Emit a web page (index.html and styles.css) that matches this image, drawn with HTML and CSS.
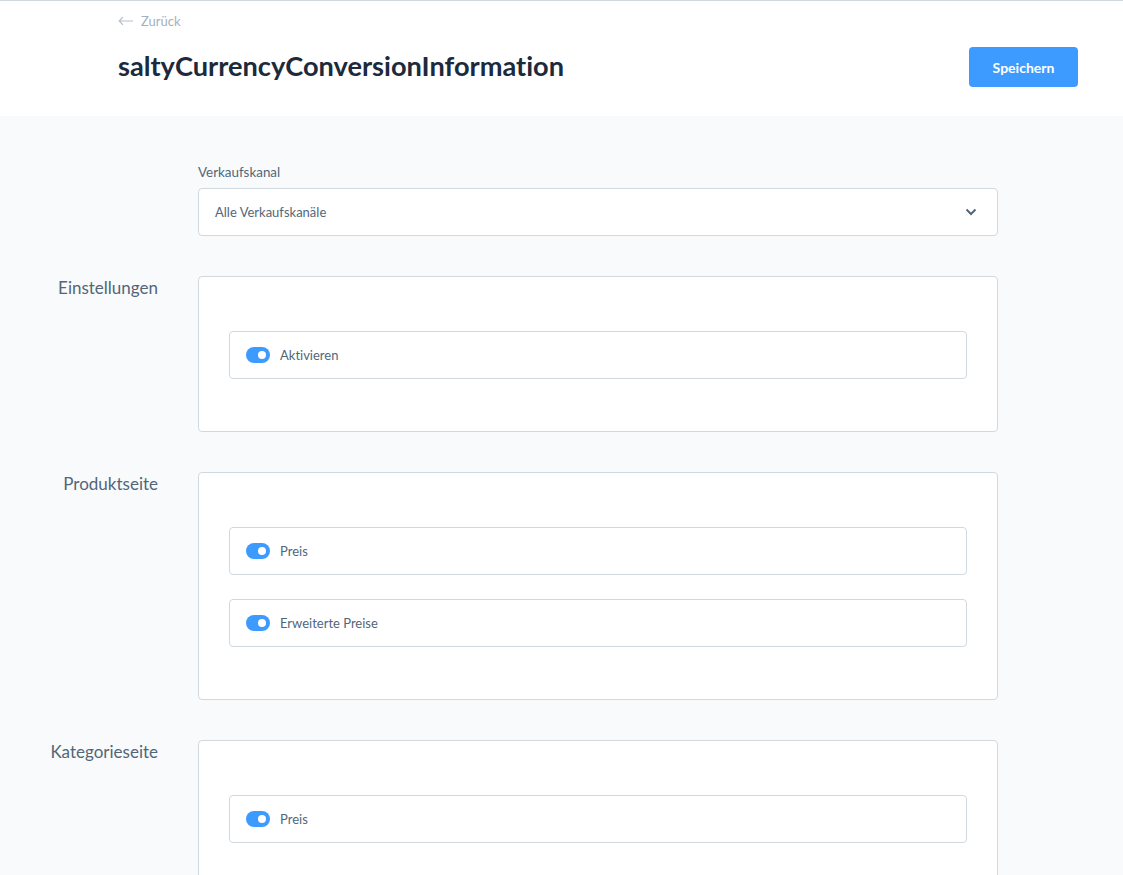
FILE: index.html
```html
<!DOCTYPE html>
<html lang="de">
<head>
<meta charset="utf-8">
<title>saltyCurrencyConversionInformation</title>
<link rel="stylesheet" href="styles.css">
</head>
<body>
<header class="topbar">
  <div class="topbar-left">
    <a class="back" href="#"><svg class="back-icon" width="16" height="10" viewBox="0 0 16 10"><path d="M15 5H1.5M5 1.2L1.2 5 5 8.8" fill="none" stroke="currentColor" stroke-width="1.2"/></svg>Zurück</a>
    <h1 class="title">saltyCurrencyConversionInformation</h1>
  </div>
  <button class="btn-primary">Speichern</button>
</header>
<main class="content">
  <div class="grid">
    <div></div>
    <div class="field">
      <label class="field-label">Verkaufskanal</label>
      <div class="select">
        <span>Alle Verkaufskanäle</span>
        <svg class="chevron" width="12" height="8" viewBox="0 0 12 8"><path d="M1.5 1.5L6 6l4.5-4.5" fill="none" stroke="#52667a" stroke-width="2"/></svg>
      </div>
    </div>

    <div class="section-label">Einstellungen</div>
    <div class="card">
      <div class="switch-row"><span class="toggle"></span>Aktivieren</div>
    </div>

    <div class="section-label">Produktseite</div>
    <div class="card">
      <div class="switch-row"><span class="toggle"></span>Preis</div>
      <div class="switch-row"><span class="toggle"></span>Erweiterte Preise</div>
    </div>

    <div class="section-label">Kategorieseite</div>
    <div class="card">
      <div class="switch-row"><span class="toggle"></span>Preis</div>
    </div>
  </div>
</main>
</body>
</html>
```

FILE: styles.css
```css
* { box-sizing: border-box; }
html, body { margin: 0; }
body {
  background: #f9fafb;
  font-family: "Source Sans Pro", "Lato", "Noto Sans", sans-serif;
  font-variant-ligatures: none;
  color: #52667a;
}
.topbar {
  background: #fff;
  border-top: 1px solid #d1d9e0;
  height: 116px;
  display: flex;
  justify-content: space-between;
  align-items: flex-start;
  padding: 0 45px 0 118px;
}
.topbar-left { display: flex; flex-direction: column; }
.back {
  display: flex;
  align-items: center;
  gap: 7px;
  margin-top: 11px;
  font-size: 13px;
  line-height: 18px;
  color: #a2b1c1;
  text-decoration: none;
}
.back-icon { color: #b3c0cc; }
.title {
  margin: 19px 0 0;
  font-size: 27.2px;
  line-height: 34px;
  font-weight: 700;
  color: #1b2a3c;
}
.btn-primary {
  margin-top: 46px;
  width: 109px;
  height: 40px;
  border: 0;
  border-radius: 4px;
  background: #3d9bff;
  color: #fff;
  font-family: inherit;
  font-size: 14px;
  font-weight: 700;
  padding-bottom: 1px;
}
.content { padding-top: 47px; }
.grid {
  display: grid;
  grid-template-columns: 158px 800px;
  column-gap: 40px;
  row-gap: 40px;
}
.field-label {
  display: block;
  font-size: 13.4px;
  line-height: 18px;
  color: #52667a;
  margin-bottom: 7px;
}
.select {
  height: 48px;
  background: #fff;
  border: 1px solid #d1d9e0;
  border-radius: 4px;
  display: flex;
  align-items: center;
  justify-content: space-between;
  padding: 0 20px 0 16px;
  font-size: 13px;
  color: #52667a;
}
.section-label {
  text-align: right;
  font-size: 17px;
  line-height: 24px;
  padding-top: 0;
  color: #52667a;
}
.card {
  background: #fff;
  border: 1px solid #d1d9e0;
  border-radius: 4px;
  padding: 54px 30px 52px;
  display: flex;
  flex-direction: column;
  gap: 24px;
}
.switch-row {
  height: 48px;
  border: 1px solid #d1d9e0;
  border-radius: 4px;
  display: flex;
  align-items: center;
  padding-left: 16px;
  font-size: 13px;
  color: #52667a;
}
.toggle {
  position: relative;
  width: 24px;
  height: 16px;
  border-radius: 8px;
  background: #3d9bff;
  margin-right: 10px;
}
.toggle::after {
  content: "";
  position: absolute;
  right: 4px;
  top: 4px;
  width: 8px;
  height: 8px;
  border-radius: 50%;
  background: #fff;
}
```
